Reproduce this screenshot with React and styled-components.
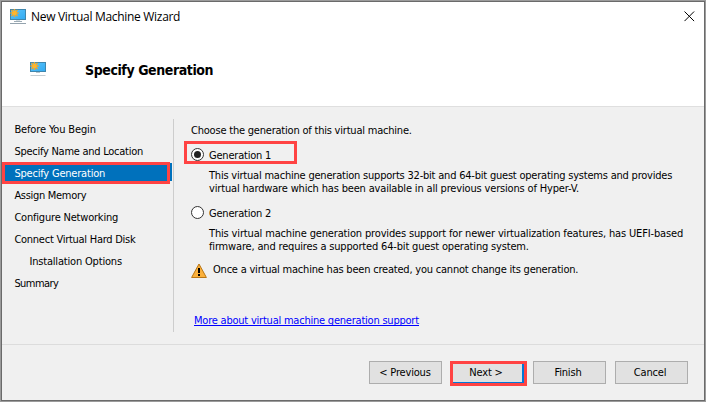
import React from "react";
import styled, { createGlobalStyle, css } from "styled-components";

const GlobalStyle = createGlobalStyle`
  * { box-sizing: border-box; }
  html, body { margin: 0; padding: 0; background: #9b9b9b; }
  body { overflow: hidden; }
`;

const Frame = styled.div`
  width: 706px;
  height: 402px;
  padding: 1px;
  background: #9b9b9b;
`;

const Dialog = styled.div`
  display: flex;
  flex-direction: column;
  width: 704px;
  height: 400px;
  border: 1px solid #6a6a6a;
  background: #f0f0f0;
  color: #000;
  font: 11px/13px "DejaVu Sans Condensed", "DejaVu Sans", sans-serif;
  letter-spacing: -0.21px;
  white-space: nowrap;
`;

const TitleBar = styled.div`
  display: flex;
  align-items: center;
  height: 28px;
  padding: 2px 9px 0 8px;
  background: #fff;
`;

const Title = styled.div`
  flex: 1;
  margin-left: 5px;
  font: 12px/16px "Open Sans", "Noto Sans", sans-serif;
  letter-spacing: -0.31px;
`;

const CloseButton = styled.button`
  display: flex;
  margin-bottom: 1px;
  padding: 0;
  border: 0;
  background: none;
`;

const Header = styled.header`
  display: flex;
  flex: none;
  align-items: center;
  gap: 39px;
  height: 76px;
  padding: 2px 0 0 28px;
  background: #fff;
`;

const Heading = styled.h1`
  margin: 2px 0 0;
  font: bold 14px/16px "DejaVu Sans Condensed", "DejaVu Sans", sans-serif;
  letter-spacing: -0.41px;
`;

const Body = styled.div`
  display: flex;
  height: 239px;
  border-top: 1px solid #dfdfdf;
  border-bottom: 1px solid #dcdcdc;
`;

const Steps = styled.nav`
  flex: none;
  width: 172px;
  height: 213px;
  margin-top: 12px;
  border-right: 1px solid #cdcdcd;
`;

const Step = styled.div`
  position: relative;
  display: flex;
  align-items: center;
  height: 18px;
  margin: 0 1px 4px 0;
  padding: 2px 0 0 ${(p) => (p.$nested ? 27.4 : 12.4)}px;
  letter-spacing: ${(p) => p.$spacing}px;
  ${(p) => p.$current && css`
    background: #0071bc;
    color: #fff;
  `}
`;

const Highlight = styled.span`
  position: absolute;
  left: ${(p) => p.$x}px;
  top: ${(p) => p.$y}px;
  width: ${(p) => p.$w}px;
  height: ${(p) => p.$h}px;
  border: 3px solid #ff4343;
`;

const Content = styled.main`
  flex: 1;
  padding: 17px 0 0 17px;
`;

const Line = styled.div`
  height: 13px;
  letter-spacing: ${(p) => p.$spacing ?? -0.21}px;
`;

const Option = styled.label`
  position: relative;
  display: flex;
  align-items: center;
  gap: 5px;
  height: 15px;
  margin-top: ${(p) => p.$gap}px;
`;

const Radio = styled.span`
  display: flex;
  align-items: center;
  justify-content: center;
  width: 13px;
  height: 13px;
  margin-bottom: 2px;
  border: 1px solid #333;
  border-radius: 50%;
  background: #fff;

  &::after {
    content: "";
    width: 7px;
    height: 7px;
    border-radius: 50%;
    background: ${(p) => (p.$checked ? "#222" : "transparent")};
  }
`;

const Description = styled.div`
  margin: 6px 0 0 18px;
`;

const Warning = styled.div`
  display: flex;
  align-items: flex-start;
  gap: 6px;
  height: 16px;
  margin-top: 10px;
`;

const HelpLink = styled.a`
  display: block;
  width: fit-content;
  height: 12px;
  margin: 35px 0 0 3px;
  border-bottom: 1px solid #0000ff;
  color: #0000ff;
  letter-spacing: -0.22px;
  text-decoration: none;
`;

const Footer = styled.footer`
  display: flex;
  justify-content: flex-end;
  gap: 9px;
  padding: 16px 16px 0 0;
`;

const Button = styled.button`
  position: relative;
  width: 73px;
  height: 23px;
  padding: 0 ${(p) => p.$inset ?? 3}px 1px 0;
  border: 1px solid #adadad;
  background: #e1e1e1;
  color: #000;
  font: inherit;
  letter-spacing: -0.18px;
  ${(p) => p.$primary && css`
    border: 2px solid #0078d7;
  `}
`;

function MonitorIcon({ small }) {
  return (
    <svg width="16" height={small ? 14 : 16} viewBox={small ? "0 0 16 14" : "0 0 16 16"}>
      <defs>
        <linearGradient id="screen" x1="0" y1="0" x2="1" y2="1">
          <stop offset="0" stopColor="#5cc4fa" />
          <stop offset="1" stopColor="#31aaf2" />
        </linearGradient>
      </defs>
      <rect x="0.5" y="0.5" width="15" height={small ? 9 : 10} fill="url(#screen)" stroke="#3f86ad" />
      {small ? (
        <path d="M6 10.5h4" stroke="#b9c6cd" />
      ) : (
        <>
          <path d="M6 11.5h4" stroke="#d5dde1" />
          <path d="M4 12.5h8" stroke="#9cabb5" />
        </>
      )}
      <path d={small ? "M0.5 13.5h15" : "M0 14.5h16"} stroke={small ? "#c6cdd2" : "#94a3ae"} />
      <path
        d="M4.5 0v8M0.5 4h8M1.5 1l6 6M7.5 1l-6 6"
        stroke="#f5a623"
        strokeWidth="1.4"
      />
      <circle cx="4.5" cy="4" r="2.3" fill="#fdb62f" />
    </svg>
  );
}

function CloseIcon() {
  return (
    <svg width="11" height="11" viewBox="0 0 11 11">
      <path d="M0.5 0.5l9.6 9.6M10.1 0.5l-9.6 9.6" stroke="#000" strokeWidth="1" />
    </svg>
  );
}

function WarningIcon() {
  return (
    <svg width="16" height="16" viewBox="0 0 16 16">
      <path d="M8 1L15.4 14.5H0.6z" fill="#fbb03b" stroke="#b87514" strokeLinejoin="round" />
      <path d="M8 5v5M8 11v2" stroke="#000" strokeWidth="2" />
    </svg>
  );
}

const steps = [
  { label: "Before You Begin", spacing: -0.14 },
  { label: "Specify Name and Location", spacing: -0.26 },
  { label: "Specify Generation", spacing: -0.2, current: true },
  { label: "Assign Memory", spacing: -0.3 },
  { label: "Configure Networking", spacing: -0.2 },
  { label: "Connect Virtual Hard Disk", spacing: -0.26 },
  { label: "Installation Options", spacing: -0.18, nested: true },
  { label: "Summary", spacing: -0.55 },
];

export default function App() {
  return (
    <Frame>
      <GlobalStyle />
      <Dialog>
        <TitleBar>
          <MonitorIcon />
          <Title>New Virtual Machine Wizard</Title>
          <CloseButton aria-label="Close">
            <CloseIcon />
          </CloseButton>
        </TitleBar>
        <Header>
          <MonitorIcon small />
          <Heading>Specify Generation</Heading>
        </Header>
        <Body>
          <Steps>
            {steps.map((s) => (
              <Step key={s.label} $spacing={s.spacing} $nested={s.nested} $current={s.current}>
                {s.label}
                {s.current && <Highlight $x={0} $y={-1} $w={168} $h={22} />}
              </Step>
            ))}
          </Steps>
          <Content>
            <Line>Choose the generation of this virtual machine.</Line>
            <Option $gap={11}>
              <Radio $checked />
              Generation 1
              <Highlight $x={-7} $y={-7} $w={113} $h={23} />
            </Option>
            <Description>
              <Line>This virtual machine generation supports 32-bit and 64-bit guest operating systems and provides</Line>
              <Line $spacing={-0.165}>virtual hardware which has been available in all previous versions of Hyper-V.</Line>
            </Description>
            <Option $gap={11}>
              <Radio />
              Generation 2
            </Option>
            <Description>
              <Line $spacing={-0.152}>This virtual machine generation provides support for newer virtualization features, has UEFI-based</Line>
              <Line $spacing={-0.17}>firmware, and requires a supported 64-bit guest operating system.</Line>
            </Description>
            <Warning>
              <WarningIcon />
              <Line>Once a virtual machine has been created, you cannot change its generation.</Line>
            </Warning>
            <HelpLink>More about virtual machine generation support</HelpLink>
          </Content>
        </Body>
        <Footer>
          <Button $inset={1}>&lt; Previous</Button>
          <Button $primary>
            Next &gt;
            <Highlight $x={-3} $y={-2} $w={77} $h={25} />
          </Button>
          <Button>Finish</Button>
          <Button>Cancel</Button>
        </Footer>
      </Dialog>
    </Frame>
  );
}
